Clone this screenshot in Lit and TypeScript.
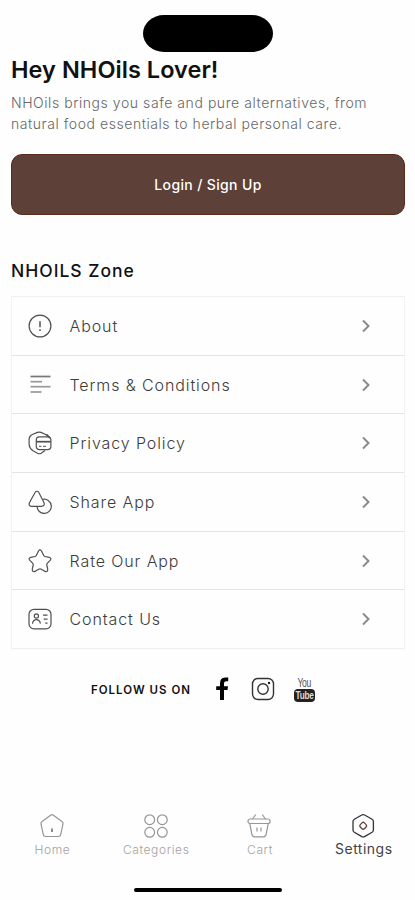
import { LitElement, html, css, svg } from "lit";
import { customElement } from "lit/decorators.js";

const icon = (body: unknown) => html`<svg class="icon" viewBox="0 0 24 24">${body}</svg>`;

const icons = {
  about: icon(svg`<circle cx="12" cy="12" r="10.9"/><path d="M12 7.2v6" stroke-width="1.5"/><path d="M12 15.2v1.8" stroke-width="1.5"/>`),
  terms: icon(svg`<g stroke="#999" stroke-width="1.7"><path d="M2.500 3.500h20" stroke="#777"/><path d="M2.500 8.700h11.500"/><path d="M2.500 13.700h20"/><path d="M2.500 19h11"/></g>`),
  privacy: icon(svg`<path d="M19.300 4.200L13 1.400Q11.300.7 9.500 1.400L4.300 3.500Q1.300 5 1.100 8v5.500Q1.500 17.500 5 19.800L9.500 22.300q1.900.9 3.700 0l3.800-2.800"/><path d="M8.300 8.800a3 3 0 0 1 3-3h8.300a3.300 3.300 0 0 1 3.300 3.300v6.200a3.300 3.300 0 0 1-3.300 3.300h-8a3.300 3.300 0 0 1-3.300-3.300z"/><path d="M8.300 10.700h14.500" stroke-width="1.700"/><path d="M11 15.300h2.500m1.500 0h3" stroke-width="1"/><path d="M18.500 3.700l3.500 3.200" stroke-width="1.800"/>`),
  share: icon(svg`<path d="M7.200 2.300a2 2 0 0 1 3.500 0l5 9.700q1.800 4-2 4.300H3.300q-3-.4-1.900-3.600z"/><path d="M15.100 9.300a7.100 7.100 0 1 1-6 7"/>`),
  rate: icon(svg`<path d="M10.500 2q1.500-2.200 3 0l2.200 4.500q.4.800 1.400 1l4 .8q3 .9 1 3.100l-2.900 3q-.6.700-.4 1.600l.9 4.200q.2 3-2.600 2.200l-3.700-2.200q-1.400-.7-2.800 0l-3.700 2.200q-2.800.8-2.600-2.200l.9-4.200q.2-.9-.4-1.600l-2.900-3q-2-2.200 1-3.100l4-.8q1-.2 1.400-1z"/>`),
  contact: icon(svg`<rect x="1" y="2.300" width="22" height="19.500" rx="5"/><circle cx="8.400" cy="9" r="2.100"/><path d="M4.500 16.700q.5-4.100 3.900-4.100t4 4.100M15 8.200h4.500M15.700 12.200h3.800M17.300 16.200h2.200"/>`),
};

const menu = [
  { key: "about", label: "About", glyph: icons.about },
  { key: "terms", label: "Terms & Conditions", glyph: icons.terms },
  { key: "privacy", label: "Privacy Policy", glyph: icons.privacy },
  { key: "share", label: "Share App", glyph: icons.share },
  { key: "rate", label: "Rate Our App", glyph: icons.rate },
  { key: "contact", label: "Contact Us", glyph: icons.contact },
];

const tabs = [
  { key: "home", label: "Home", glyph: icon(svg`<path d="M10.600 1.200q1.400-1 2.800 0l8.800 6.600q1 .8.800 2l-2.300 10.800q-.4 1.900-2.200 1.900H5.500q-1.800 0-2.200-1.900L1 9.800q-.2-1.200.8-2z"/><path d="M12 14.500v3.500" stroke="#666" stroke-width="1.500"/>`) },
  { key: "categories", label: "Categories", glyph: icon(svg`<circle cx="5.700" cy="5.700" r="4.900"/><circle cx="18.300" cy="5.700" r="4.900"/><circle cx="5.700" cy="18.300" r="4.900"/><circle cx="18.300" cy="18.300" r="4.900"/>`) },
  { key: "cart", label: "Cart", glyph: icon(svg`<path d="M8.800.5L5.500 5M15.200.5L18.500 5"/><rect x="1" y="5" width="22" height="4.500" rx="2"/><path d="M2.800 9.500l2 10.700q.5 2.600 2.800 2.600h8.800q2.300 0 2.800-2.600l2-10.700"/><path d="M10 13.500v4M14 13.500v4"/>`) },
  { key: "settings", label: "Settings", glyph: icon(svg`<path d="M10.800 1q1.400-.7 2.800 0l7.500 4.300q1.300.8 1.300 2.200v8.600q0 1.400-1.300 2.200l-7.500 4.300q-1.400.7-2.800 0l-7.500-4.300q-1.300-.8-1.300-2.200V7.500q0-1.400 1.300-2.200z"/><rect x="9.300" y="8.900" width="5.800" height="5.800" rx="1.700" transform="rotate(45 12.200 11.800)" stroke="#5d4037"/>`) },
];

@customElement("app-root")
export class AppRoot extends LitElement {
  static styles = css`
    :host {
      display: flex;
      flex-direction: column;
      box-sizing: border-box;
      height: 900px;
      padding: 15px 10px 8px 11px;
      overflow: hidden;
      background: #fefefe;
      color: #111;
      font-family: Inter, "Liberation Sans", sans-serif;
    }
    h1, h2, p { margin: 0; white-space: nowrap; }
    .icon {
      display: block;
      width: 24px;
      height: 24px;
      fill: none;
      stroke: #505050;
      stroke-width: 1.2;
      stroke-linecap: butt;
      stroke-linejoin: round;
    }
    .island {
      width: 130px;
      height: 37px;
      margin-left: 132px;
      border-radius: 21px / 18.500px;
      background: #000;
      flex: none;
    }
    h1 { margin-top: 3px; line-height: 30px; font-size: 23.500px; font-weight: 600; letter-spacing: 0.050px; }
    .intro { margin-top: 7px; line-height: 21px; font-size: 14px; font-weight: 300; letter-spacing: 0.56px; color: #666; }
    .login {
      box-sizing: border-box;
      flex: none;
      height: 61px;
      margin-top: 20px;
      padding: 0;
      border: 1px solid #5a2a1b;
      border-radius: 11px;
      background: #5d4037;
      color: #fff;
      font: 500 14px/59px Inter, sans-serif;
      letter-spacing: 0.350px;
      text-align: center;
    }
    h2 { margin-top: 44px; line-height: 24px; font-size: 17.500px; font-weight: 500; letter-spacing: 1px; }
    .menu { display: grid; grid-template-rows: repeat(6, 58.700px); margin-top: 13px; border: 1px solid #f1f1f1; border-bottom: 0; flex: none; }
    .row { display: flex; align-items: center; box-sizing: border-box; border-bottom: 1px solid #e5e5e5; padding: 0 32px 0 16px; }
    .row:last-child { border-bottom-color: #efefef; }
    .name { flex: 1; margin-left: 17.500px; font-size: 16px; font-weight: 300; letter-spacing: 0.900px; color: #3c3c3c; }
    .chevron { width: 12px; height: 14px; fill: none; stroke: #8b8b8b; stroke-width: 2; }
    .follow { display: flex; align-items: center; height: 26px; margin: 27px 0 0 80px; flex: none; }
    .follow-label { width: 120px; padding-top: 2px; font-size: 11.500px; font-weight: 600; letter-spacing: 1px; white-space: nowrap; }
    .fb { width: 22px; height: 26px; }
    .ig { width: 24px; height: 24px; margin-left: 18px; fill: none; stroke: #333; stroke-width: 1.400; }
    .yt { display: flex; flex-direction: column; align-items: center; margin-left: 18px; width: 22px; }
    .you { font: 400 12px/12px "Liberation Sans", sans-serif; letter-spacing: -0.6px; color: #555; transform: scaleX(0.720); }
    .tube { width: 21px; height: 13px; border-radius: 4px; background: #222; color: #ddd; text-align: center; }
    .tube-text { display: block; font: 700 11px/13px "Liberation Sans", sans-serif; letter-spacing: -0.4px; transform: scaleX(0.750); margin: 0 -4px; }
    .tabs { display: grid; grid-template-columns: repeat(4, 103.800px); margin: auto -10px 30px -11px; flex: none; }
    .tab { display: flex; flex-direction: column; align-items: center; color: #a2a2a2; font-size: 12px; font-weight: 300; line-height: 16px; letter-spacing: 0.6px; gap: 4px; }
    .tab span { margin-right: -1px; }
    .tab .icon { stroke: #969696; stroke-width: 1.200; }
    .settings { color: #444; font-size: 14px; font-weight: 400; gap: 2px; line-height: 17px; letter-spacing: 0.500px; }
    .settings .icon { stroke: #333; stroke-width: 1.300; }
    .indicator { width: 148px; height: 4px; border-radius: 2px; background: #000; margin-left: 123px; flex: none; }
  `;

  render() {
    return html`
      <div class="island"></div>
      <h1>Hey NHOils Lover!</h1>
      <p class="intro">NHOils brings you safe and pure alternatives, from<br />natural food essentials to herbal personal care.</p>
      <button class="login">Login / Sign Up</button>
      <h2>NHOILS Zone</h2>
      <div class="menu">
        ${menu.map((m) => html`
          <div class="row">
            ${m.glyph}<span class="name">${m.label}</span>
            <svg class="chevron" viewBox="0 0 12 14"><path d="M3 1.500l5.500 5.500L3 12.500" /></svg>
          </div>`)}
      </div>
      <div class="follow">
        <span class="follow-label">FOLLOW US ON</span>
        <svg class="fb" viewBox="0 0 22 26"><path fill="#000" d="M9 24V14H5.200v-3.700H9V7.500Q9 1.500 14.200 1.500h3v3.700h-2q-2.200 0-2.200 2.100v3h4L16.500 14H13v10z" /></svg>
        <svg class="ig" viewBox="0 0 24 24"><rect x="1.500" y="1.500" width="21" height="21" rx="5.500" /><circle cx="12" cy="12" r="5.200" /><circle cx="18" cy="6" r="1.200" fill="#222" stroke="none" /></svg>
        <div class="yt"><span class="you">You</span><span class="tube"><span class="tube-text">Tube</span></span></div>
      </div>
      <div class="tabs">
        ${tabs.map((t) => html`<div class="tab ${t.key}">${t.glyph}<span>${t.label}</span></div>`)}
      </div>
      <div class="indicator"></div>
    `;
  }
}
